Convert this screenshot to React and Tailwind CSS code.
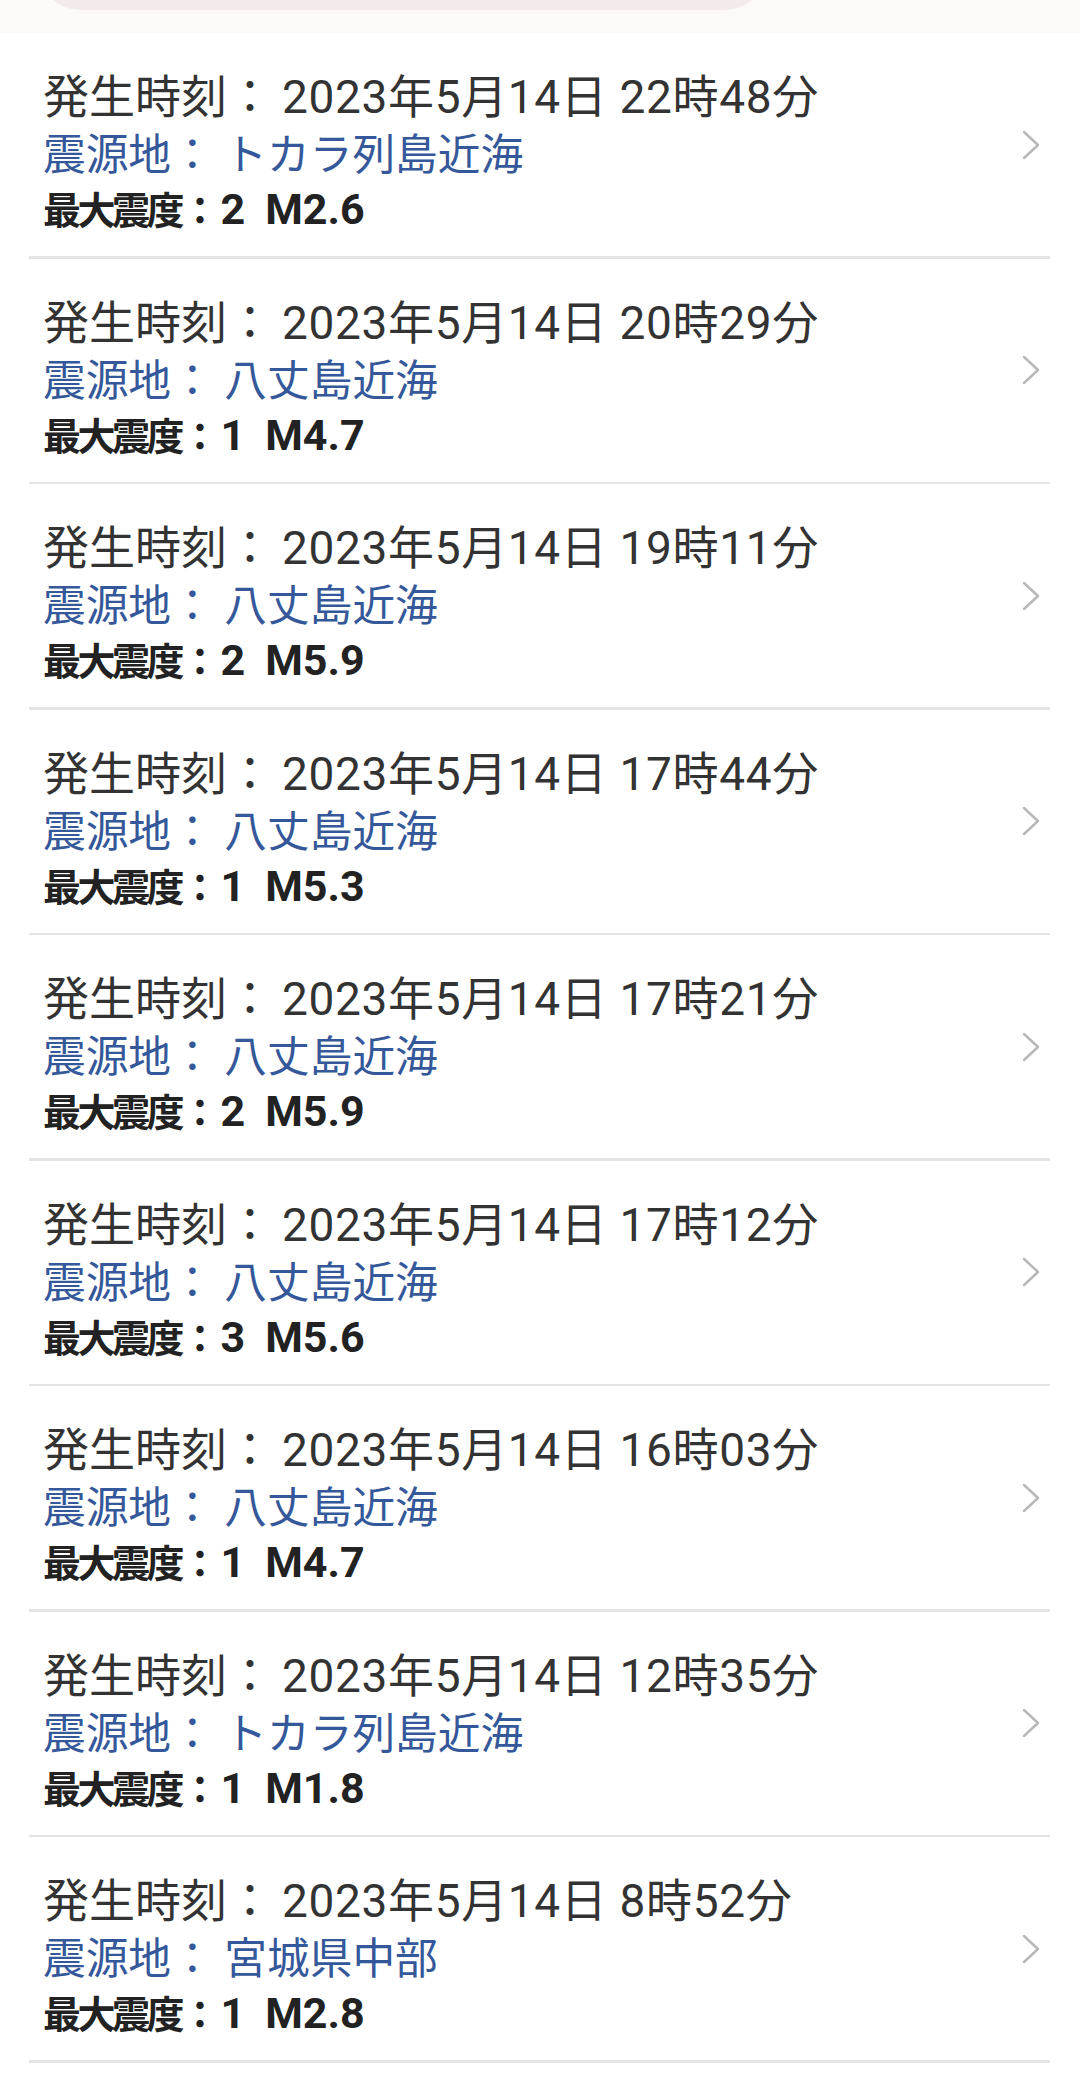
const quakes = [
  { time: "22時48分", place: "トカラ列島近海", shindo: "2", mag: "M2.6" },
  { time: "20時29分", place: "八丈島近海", shindo: "1", mag: "M4.7" },
  { time: "19時11分", place: "八丈島近海", shindo: "2", mag: "M5.9" },
  { time: "17時44分", place: "八丈島近海", shindo: "1", mag: "M5.3" },
  { time: "17時21分", place: "八丈島近海", shindo: "2", mag: "M5.9" },
  { time: "17時12分", place: "八丈島近海", shindo: "3", mag: "M5.6" },
  { time: "16時03分", place: "八丈島近海", shindo: "1", mag: "M4.7" },
  { time: "12時35分", place: "トカラ列島近海", shindo: "1", mag: "M1.8" },
  { time: "8時52分", place: "宮城県中部", shindo: "1", mag: "M2.8" },
];

const Chevron = () => (
  <svg width="18" height="30" viewBox="0 0 18 30" fill="none">
    <path d="M2 2 L16 15 L2 28" stroke="#b8b8b8" strokeWidth="2.5" strokeLinecap="round" strokeLinejoin="round" />
  </svg>
);

const QuakeRow = ({ q }) => {
  return (
    <div>
      <div className="flex items-center h-[223px] pl-[43px] pr-[40px]">
        <div className="flex-1 flex flex-col pt-[13px]">
          <div className="text-[46px] leading-[58px] text-[#333333] whitespace-nowrap">
            <span>発生時刻：</span>
            <span className="ml-[9px] tracking-[0.65px]">2023年5月14日 {q.time}</span>
          </div>
          <div className="text-[42.7px] leading-[58px] text-[#34589a] whitespace-nowrap">
            震源地： {q.place}
          </div>
          <div className="flex items-baseline h-[50px] leading-[50px] font-bold text-[#222222] whitespace-nowrap">
            <span className="text-[38px] tracking-[-3.5px]">最大震度：</span>
            <span className="text-[43px] ml-[5px]">{q.shindo}</span>
            <span className="text-[43px] ml-[20px]">{q.mag}</span>
          </div>
        </div>
        <Chevron />
      </div>
      <div className="ml-[29px] mr-[30px] h-[2.5px] bg-[#e4e4e4]"></div>
    </div>
  );
};

export default function App() {
  return (
    <div
      className="w-[1080px] min-h-[2090px] bg-white"
      style={{ fontFamily: 'Roboto, "Noto Sans CJK JP", sans-serif' }}
    >
      <div className="h-[33px] bg-[#fdf9f8] overflow-hidden">
        <div className="-mt-[70px] ml-[40px] w-[725px] h-[80px] rounded-full bg-[#f3ebe9]"></div>
      </div>
      {quakes.map((q, i) => (
        <QuakeRow key={i} q={q} />
      ))}
    </div>
  );
}
